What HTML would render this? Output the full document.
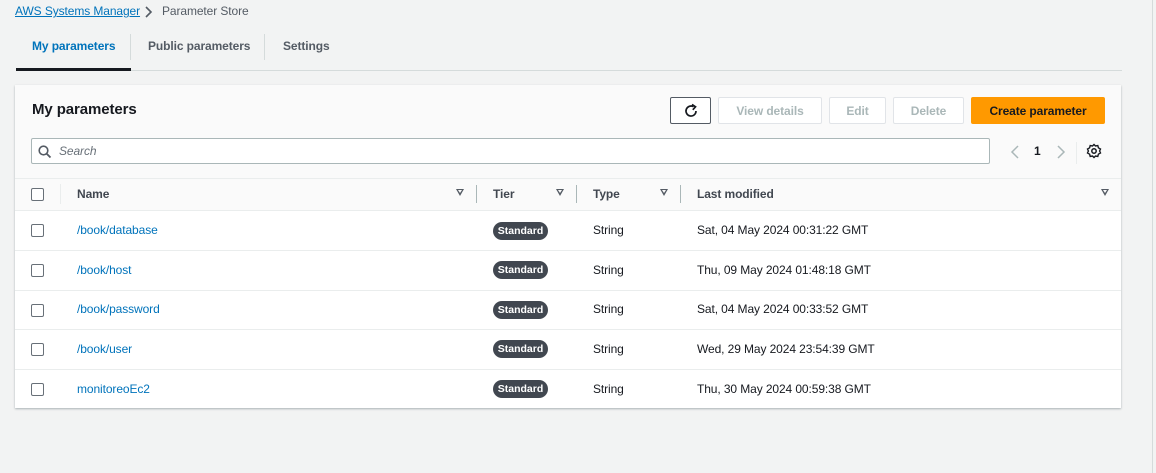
<!DOCTYPE html>
<html><head><style>
*{box-sizing:border-box;margin:0;padding:0}
body{width:1156px;height:473px;background:#f2f3f3;font-family:"Liberation Sans",sans-serif;font-size:12px;letter-spacing:-0.1px;color:#16191f;position:relative;overflow:hidden}
.a{position:absolute}
.btn{position:absolute;top:97px;height:27px;border:1px solid #e1e4e8;background:#fff;color:#aab7b8;font-weight:bold;font-size:12px;display:flex;align-items:center;justify-content:center;border-radius:2px}
.cb{position:absolute;left:31px;width:13px;height:13px;border:1px solid #687078;border-radius:2px;background:#fff}
.badge{position:absolute;left:493px;width:55px;height:18px;border-radius:9px;background:#414750;color:#fff;font-size:10.5px;font-weight:bold;display:flex;align-items:center;justify-content:center;letter-spacing:0}
.tri{position:absolute;top:189px;width:0;height:0;border-left:4px solid transparent;border-right:4px solid transparent;border-top:7px solid #545b64}
.tri:after{content:"";position:absolute;left:-2px;top:-6px;border-left:2px solid transparent;border-right:2px solid transparent;border-top:3px solid #fafafa}
.vd{position:absolute;top:185px;width:1px;height:18px;background:#aab7b8}
.row{position:absolute;left:15px;width:1106px;height:1px;background:#eaeded}
.lnk{position:absolute;left:77px;color:#0073bb}
.ty{position:absolute;left:593px}
.dt{position:absolute;left:697px}
</style></head><body>
<div class="a" style="left:15px;top:4px;color:#0073bb;text-decoration:underline">AWS Systems Manager</div>
<svg class="a" style="left:143px;top:5px" width="10" height="14"><path d="M3 2 L8 7 L3 12" fill="none" stroke="#545b64" stroke-width="1.6"/></svg>
<div class="a" style="left:162px;top:4px;color:#545b64">Parameter Store</div>

<div class="a" style="left:32px;top:39px;color:#0073bb;font-weight:bold">My parameters</div>
<div class="a" style="left:130px;top:34px;width:1px;height:26px;background:#d5dbdb"></div>
<div class="a" style="left:148px;top:39px;color:#545b64;font-weight:bold">Public parameters</div>
<div class="a" style="left:264px;top:34px;width:1px;height:26px;background:#d5dbdb"></div>
<div class="a" style="left:283px;top:39px;color:#545b64;font-weight:bold">Settings</div>
<div class="a" style="left:16px;top:70px;width:1106px;height:1px;background:#d5dbdb"></div>
<div class="a" style="left:16px;top:68px;width:115px;height:3px;background:#16191f"></div>

<div class="a" style="left:15px;top:85px;width:1106px;height:323px;background:#fff;box-shadow:0 1px 2px rgba(0,28,36,.3)"></div>
<div class="a" style="left:15px;top:85px;width:1106px;height:125px;background:#fafafa"></div>
<div class="a" style="left:32px;top:101px;font-size:15px;font-weight:bold">My parameters</div>

<div class="btn" style="left:670px;width:41px;border-color:#545b64"><svg width="16" height="16" viewBox="0 0 16 16"><path d="M13 8 A5 5 0 1 1 10.5 3.7" fill="none" stroke="#16191f" stroke-width="1.7"/><path d="M9 1.5 L12.5 3.8 L9.8 6.8" fill="none" stroke="#16191f" stroke-width="1.7"/></svg></div>
<div class="btn" style="left:718px;width:104px">View details</div>
<div class="btn" style="left:829px;width:57px">Edit</div>
<div class="btn" style="left:893px;width:71px">Delete</div>
<div class="btn" style="left:971px;width:134px;background:#ff9900;border-color:#ff9900;color:#16191f">Create parameter</div>

<div class="a" style="left:31px;top:138px;width:959px;height:26px;border:1px solid #aab7b8;background:#fff;border-radius:2px"></div>
<svg class="a" style="left:38px;top:145px" width="14" height="14"><circle cx="5.5" cy="5.5" r="4.3" fill="none" stroke="#545b64" stroke-width="1.6"/><path d="M8.7 8.7 L12.5 12.5" stroke="#545b64" stroke-width="1.8"/></svg>
<div class="a" style="left:59px;top:144px;color:#687078;font-style:italic">Search</div>
<svg class="a" style="left:1009px;top:144px" width="12" height="16"><path d="M9 2 L3 8 L9 14" fill="none" stroke="#aab7b8" stroke-width="1.5"/></svg>
<div class="a" style="left:1034px;top:144px;font-weight:bold">1</div>
<svg class="a" style="left:1055px;top:144px" width="12" height="16"><path d="M3 2 L9 8 L3 14" fill="none" stroke="#aab7b8" stroke-width="1.5"/></svg>
<div class="a" style="left:1076px;top:142px;width:1px;height:22px;background:#eaeded"></div>
<svg class="a" style="left:1086px;top:143px" width="16" height="16" viewBox="0 0 16 16"><circle cx="8" cy="8" r="2.2" fill="none" stroke="#16191f" stroke-width="1.5"/><path d="M8 1.5 L9.5 3 L11.8 2.6 L12.4 4.8 L14.5 6 L13.6 8 L14.5 10 L12.4 11.2 L11.8 13.4 L9.5 13 L8 14.5 L6.5 13 L4.2 13.4 L3.6 11.2 L1.5 10 L2.4 8 L1.5 6 L3.6 4.8 L4.2 2.6 L6.5 3 Z" fill="none" stroke="#16191f" stroke-width="1.4"/></svg>

<div class="row" style="top:178px"></div>
<div class="cb" style="top:188px"></div>
<div class="a" style="left:60px;top:184px;width:1px;height:20px;background:#eaeded"></div>
<div class="a" style="left:77px;top:187px;font-weight:bold;color:#414750">Name</div>
<div class="tri" style="left:456px"></div><div class="vd" style="left:476px"></div>
<div class="a" style="left:493px;top:187px;font-weight:bold;color:#414750">Tier</div>
<div class="tri" style="left:556px"></div><div class="vd" style="left:576px"></div>
<div class="a" style="left:593px;top:187px;font-weight:bold;color:#414750">Type</div>
<div class="tri" style="left:660px"></div><div class="vd" style="left:680px"></div>
<div class="a" style="left:697px;top:187px;font-weight:bold;color:#414750">Last modified</div>
<div class="tri" style="left:1101px"></div>
<div class="row" style="top:210px"></div>

<div class="cb" style="top:224px"></div><div class="lnk" style="top:223px">/book/database</div><div class="badge" style="top:222px">Standard</div><div class="ty" style="top:223px">String</div><div class="dt" style="top:223px">Sat, 04 May 2024 00:31:22 GMT</div>
<div class="row" style="top:250px"></div>
<div class="cb" style="top:264px"></div><div class="lnk" style="top:263px">/book/host</div><div class="badge" style="top:261px">Standard</div><div class="ty" style="top:263px">String</div><div class="dt" style="top:263px">Thu, 09 May 2024 01:48:18 GMT</div>
<div class="row" style="top:290px"></div>
<div class="cb" style="top:304px"></div><div class="lnk" style="top:302px">/book/password</div><div class="badge" style="top:301px">Standard</div><div class="ty" style="top:302px">String</div><div class="dt" style="top:302px">Sat, 04 May 2024 00:33:52 GMT</div>
<div class="row" style="top:329px"></div>
<div class="cb" style="top:343px"></div><div class="lnk" style="top:342px">/book/user</div><div class="badge" style="top:340px">Standard</div><div class="ty" style="top:342px">String</div><div class="dt" style="top:342px">Wed, 29 May 2024 23:54:39 GMT</div>
<div class="row" style="top:369px"></div>
<div class="cb" style="top:383px"></div><div class="lnk" style="top:382px">monitoreoEc2</div><div class="badge" style="top:380px">Standard</div><div class="ty" style="top:382px">String</div><div class="dt" style="top:382px">Thu, 30 May 2024 00:59:38 GMT</div>

<div class="a" style="left:1152px;top:0;width:1px;height:473px;background:#d5dbdb"></div>
</body></html>
